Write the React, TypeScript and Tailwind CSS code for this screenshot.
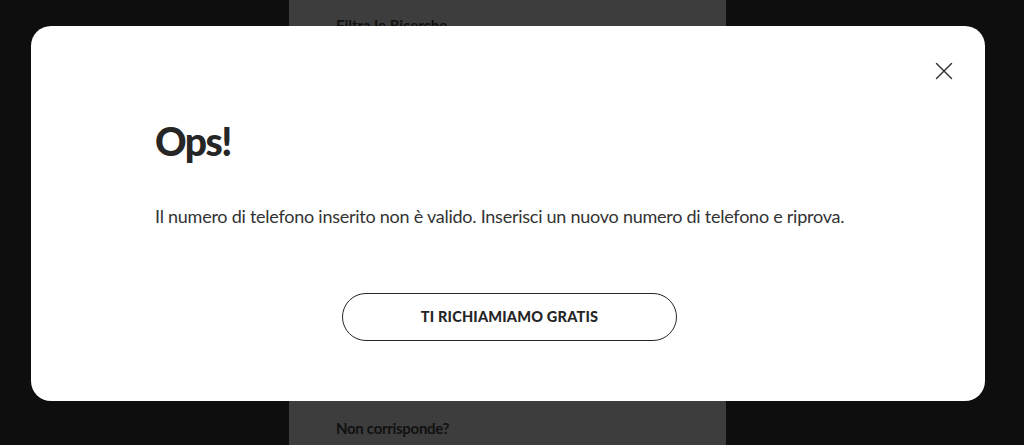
import React from 'react';

const CloseIcon: React.FC = () => (
  <svg width="18" height="18" viewBox="0 0 18 18" fill="none" stroke="#333333" strokeWidth="1.4" strokeLinecap="round">
    <line x1="1.5" y1="1.5" x2="16.5" y2="16.5" />
    <line x1="16.5" y1="1.5" x2="1.5" y2="16.5" />
  </svg>
);

const App: React.FC = () => {
  return (
    <div className="relative h-[445px] w-[1024px] overflow-hidden bg-[#0e0e0e] font-['Lato',sans-serif]">
      {/* page behind the overlay */}
      <div className="ml-[289px] flex h-full w-[437px] flex-col justify-between bg-[#3d3d3d] pl-[47px] pt-[14px] pb-[6px]">
        <p className="text-[15px] font-bold text-[#111111]">Filtra le Ricerche</p>
        <p className="text-[15px] font-bold tracking-[-0.3px] text-[#111111]">Non corrisponde?</p>
      </div>

      {/* modal */}
      <div className="absolute inset-0 pl-[31px] pt-[26px]">
        <div className="flex h-[375px] w-[954px] flex-col rounded-[20px] bg-white">
          <div className="flex justify-end pr-[32px] pt-[36px]">
            <button className="flex h-[18px] w-[18px] items-center justify-center">
              <CloseIcon />
            </button>
          </div>
          <div className="pl-[124px] pr-[40px]">
            <h2 className="mt-[42px] text-[39px] font-black leading-none tracking-[-1.5px] text-[#262626]">Ops!</h2>
            <p className="mt-[43px] text-[18px] leading-[24px] tracking-[-0.25px] text-[#333333]">
              Il numero di telefono inserito non è valido. Inserisci un nuovo numero di telefono e riprova.
            </p>
          </div>
          <div className="mt-[65px] flex justify-center pl-[3px]">
            <button className="h-[48px] w-[335px] rounded-full border-[1.5px] border-[#262626] text-[14.5px] font-black tracking-[0.2px] text-[#262626]">
              TI RICHIAMIAMO GRATIS
            </button>
          </div>
        </div>
      </div>
    </div>
  );
};

export default App;
